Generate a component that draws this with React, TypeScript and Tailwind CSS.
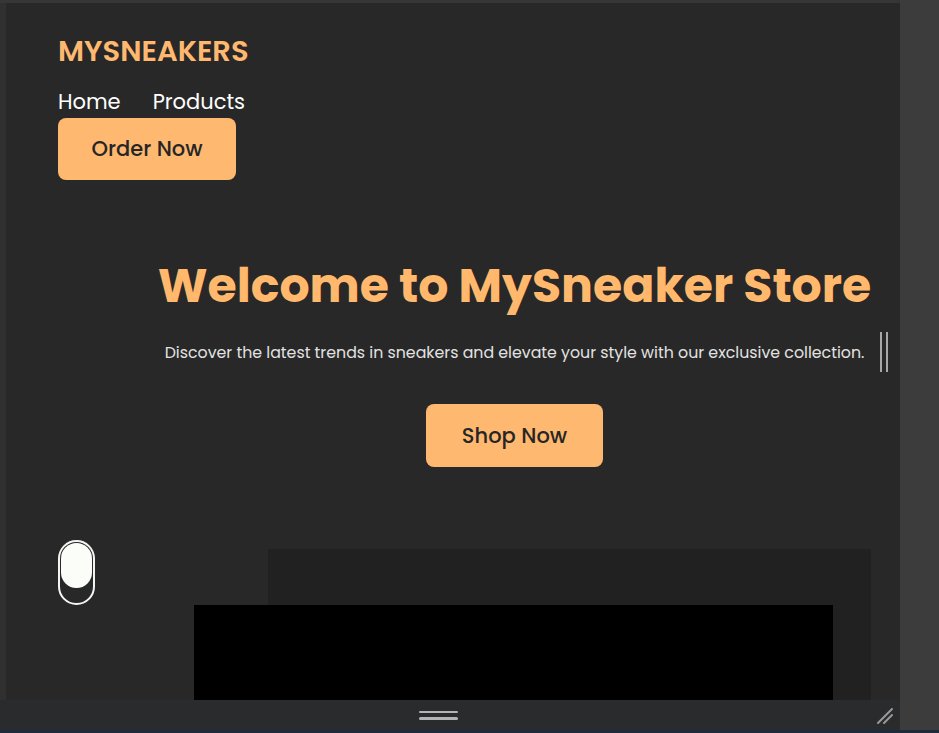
import React from 'react';

const Toggle = () => (
  <div className="w-[37px] h-[65px] shrink-0 rounded-full border-2 border-[#f4f4f2] p-[1px]">
    <div className="w-full h-[45px] rounded-full bg-[#fbfdf8]"></div>
  </div>
);

const ResizeGrip = () => (
  <svg width="18" height="18" viewBox="0 0 18 18" className="text-[#9a9a9a]">
    <path d="M2 16 L16 2" stroke="currentColor" strokeWidth="2" strokeLinecap="round" />
    <path d="M8 16 L16 8" stroke="currentColor" strokeWidth="2" strokeLinecap="round" />
  </svg>
);

const App = () => {
  return (
    <div className="w-[939px] h-[733px] bg-[#3c3c3c] flex flex-col overflow-hidden font-['Poppins','Open_Sans',sans-serif]">
      <div className="flex flex-1 min-h-0">
        <div className="w-[900px] flex flex-col">
          <div className="h-[3px] bg-[#363636]"></div>
          <div className="flex flex-1 min-h-0">
            <div className="w-[6px] bg-[#303030]"></div>

            {/* Page */}
            <div className="relative flex-1 bg-[#282828] overflow-hidden pt-[29px] pl-[52px] pr-[29px]">
              <header className="flex flex-col items-start">
                <div className="text-[29px] leading-[38px] font-semibold text-[#ffb86f]">MYSNEAKERS</div>
                <nav className="mt-[17px] flex gap-[32px] text-[21px] leading-[30px] text-white">
                  <a>Home</a>
                  <a>Products</a>
                </nav>
                <button className="mt-[1px] w-[178px] h-[62px] rounded-lg bg-[#ffb870] text-[#262626] text-[21px] font-medium">
                  Order Now
                </button>
              </header>

              <section className="mt-[82px] pl-[100px] flex flex-col items-center text-center">
                <h1 className="text-[47.4px] leading-[48px] font-bold text-[#ffb86c] whitespace-nowrap">Welcome to MySneaker Store</h1>
                <p className="mt-[31px] text-[15.8px] leading-[24px] text-[#e2e2e2] whitespace-nowrap">
                  Discover the latest trends in sneakers and elevate your style with our exclusive collection.
                </p>
                <button className="mt-[39px] w-[177px] h-[63px] rounded-lg bg-[#ffb870] text-[#262626] text-[21px] font-medium">
                  Shop Now
                </button>
              </section>

              <section className="mt-[73px] flex items-start">
                <Toggle />
                <div className="relative ml-[173px] mt-[9px] w-[603px] h-[200px] bg-[#212121]">
                  <div className="absolute left-[-74px] top-[56px] w-[639px] h-[150px] bg-black"></div>
                </div>
              </section>

              {/* scroll indicator */}
              <div className="absolute left-[874px] top-[329px] flex gap-[4px]">
                <div className="w-[2px] h-[40px] bg-[#a8a8a8]"></div>
                <div className="w-[2px] h-[40px] bg-[#a8a8a8]"></div>
              </div>
            </div>
          </div>

          {/* bottom bar */}
          <div className="h-[30px] bg-[#2a2b2d] flex items-center">
            <div className="ml-[419px] flex flex-col gap-[4px]">
              <div className="w-[39px] h-[2.5px] rounded-full bg-[#b4b4b4]"></div>
              <div className="w-[39px] h-[2.5px] rounded-full bg-[#b4b4b4]"></div>
            </div>
            <div className="ml-auto mr-[6px] mt-[1px]">
              <ResizeGrip />
            </div>
          </div>
        </div>
        <div className="w-[39px] bg-[#3c3c3c]"></div>
      </div>
      <div className="h-[3px] bg-[#1d2b3f]"></div>
    </div>
  );
};

export default App;
